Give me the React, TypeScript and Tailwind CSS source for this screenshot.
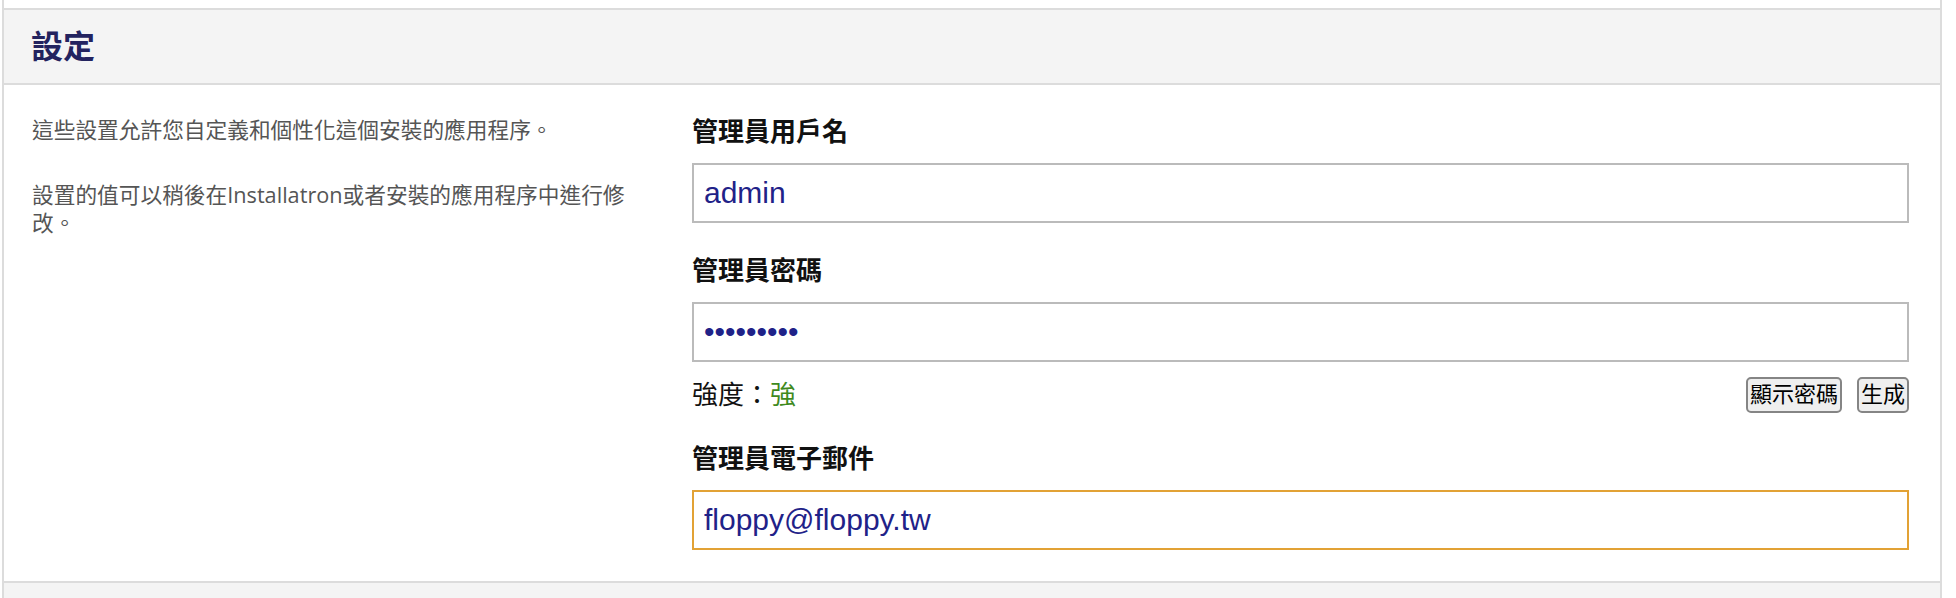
import { useState } from 'react';

const sans = "font-['Liberation_Sans','Noto_Sans_CJK_TC',sans-serif]";

function Field({ label, children }: { label: string; children: React.ReactNode }) {
  return (
    <div>
      <label className="block text-[26px] leading-[32px] font-bold text-[#111]">{label}</label>
      <div className="mt-[15px]">{children}</div>
    </div>
  );
}

export default function App() {
  const [username] = useState('admin');
  const [password] = useState('123456789');
  const [email] = useState('floppy@floppy.tw');

  const inputClass =
    "block w-full h-[60px] border-2 bg-white px-[10px] text-[30px] text-[#1f2288] outline-none font-['Liberation_Sans',sans-serif]";

  return (
    <div className={`min-h-[598px] bg-white ${sans}`}>
      <div className="ml-[2px] w-[1940px] border-x-2 border-[#dcdcdc]">
        <div className="h-[8px]" />

        {/* header */}
        <div className="border-y-2 border-[#dcdcdc] bg-[#f4f4f4] h-[77px] flex items-center pl-[27px]">
          <h2 className="text-[32px] font-bold text-[#23235f]">設定</h2>
        </div>

        {/* body */}
        <div className="flex gap-[55px] pl-[28px] pr-[31px] pt-[31px] pb-[31px]">
          <div className="w-[605px] shrink-0 text-[21.7px] leading-[28px] text-[#555] font-['Open_Sans','Noto_Sans_CJK_TC',sans-serif]">
            <p>這些設置允許您自定義和個性化這個安裝的應用程序。</p>
            <p className="mt-[37px]">設置的值可以稍後在Installatron或者安裝的應用程序中進行修改。</p>
          </div>

          <div className="flex-1 flex flex-col">
            <Field label="管理員用戶名">
              <input className={`${inputClass} border-[#bbbbbb]`} value={username} readOnly />
            </Field>

            <div className="mt-[32px]">
              <Field label="管理員密碼">
                <input type="password" className={`${inputClass} border-[#bbbbbb]`} value={password} readOnly />
              </Field>
            </div>

            <div className="mt-[15px] h-[36px] flex items-center justify-between">
              <div className="text-[26px] text-[#111]">
                強度：<span className="text-[#3f8a1e]">強</span>
              </div>
              <div className="flex gap-[15px]">
                <button className="h-[36px] px-[2px] border-2 border-[#858585] rounded-[5px] bg-[#efefef] text-[22px] leading-none text-black">
                  顯示密碼
                </button>
                <button className="h-[36px] px-[2px] border-2 border-[#858585] rounded-[5px] bg-[#efefef] text-[22px] leading-none text-black">
                  生成
                </button>
              </div>
            </div>

            <div className="mt-[30px]">
              <Field label="管理員電子郵件">
                <input className={`${inputClass} border-[#e2a235]`} value={email} readOnly />
              </Field>
            </div>
          </div>
        </div>

        {/* next section */}
        <div className="border-t-2 border-[#dcdcdc] bg-[#f4f4f4] h-[60px]" />
      </div>
    </div>
  );
}
